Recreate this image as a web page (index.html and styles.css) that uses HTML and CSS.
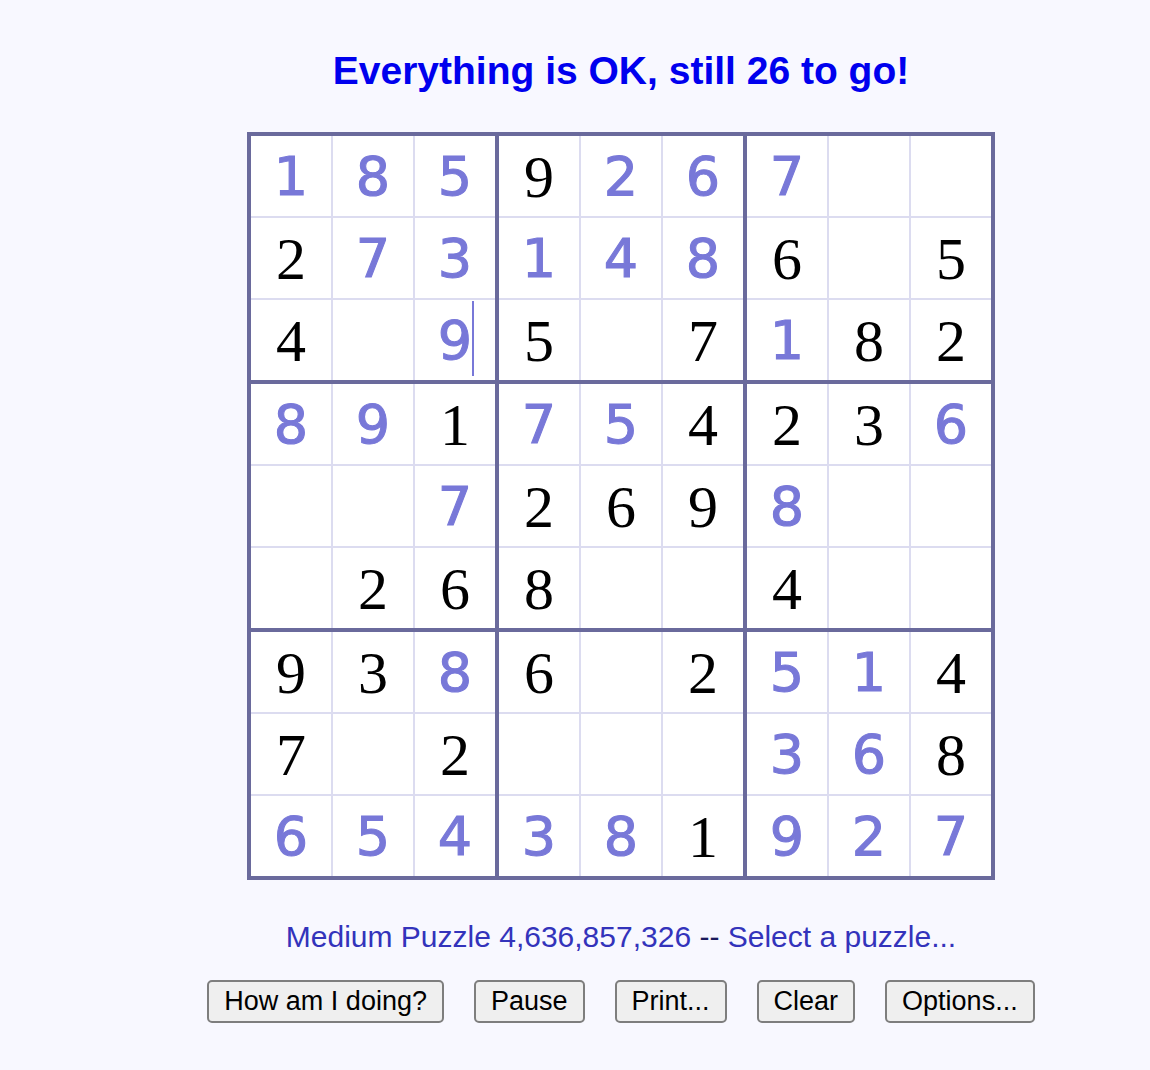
FILE: index.html
```html
<!DOCTYPE html>
<html lang="en">
<head>
<meta charset="utf-8">
<title>Sudoku</title>
<link rel="stylesheet" href="styles.css">
</head>
<body>
<main class="page">
  <h1 class="status">Everything is OK, still 26 to go!</h1>
  <div class="board">
    <div class="box">
      <div class="cell u">1</div><div class="cell u">8</div><div class="cell u">5</div>
      <div class="cell k">2</div><div class="cell u">7</div><div class="cell u">3</div>
      <div class="cell k">4</div><div class="cell"></div><div class="cell u"><span class="caret">9</span></div>
    </div>
    <div class="box">
      <div class="cell k">9</div><div class="cell u">2</div><div class="cell u">6</div>
      <div class="cell u">1</div><div class="cell u">4</div><div class="cell u">8</div>
      <div class="cell k">5</div><div class="cell"></div><div class="cell k">7</div>
    </div>
    <div class="box">
      <div class="cell u">7</div><div class="cell"></div><div class="cell"></div>
      <div class="cell k">6</div><div class="cell"></div><div class="cell k">5</div>
      <div class="cell u">1</div><div class="cell k">8</div><div class="cell k">2</div>
    </div>
    <div class="box">
      <div class="cell u">8</div><div class="cell u">9</div><div class="cell k">1</div>
      <div class="cell"></div><div class="cell"></div><div class="cell u">7</div>
      <div class="cell"></div><div class="cell k">2</div><div class="cell k">6</div>
    </div>
    <div class="box">
      <div class="cell u">7</div><div class="cell u">5</div><div class="cell k">4</div>
      <div class="cell k">2</div><div class="cell k">6</div><div class="cell k">9</div>
      <div class="cell k">8</div><div class="cell"></div><div class="cell"></div>
    </div>
    <div class="box">
      <div class="cell k">2</div><div class="cell k">3</div><div class="cell u">6</div>
      <div class="cell u">8</div><div class="cell"></div><div class="cell"></div>
      <div class="cell k">4</div><div class="cell"></div><div class="cell"></div>
    </div>
    <div class="box">
      <div class="cell k">9</div><div class="cell k">3</div><div class="cell u">8</div>
      <div class="cell k">7</div><div class="cell"></div><div class="cell k">2</div>
      <div class="cell u">6</div><div class="cell u">5</div><div class="cell u">4</div>
    </div>
    <div class="box">
      <div class="cell k">6</div><div class="cell"></div><div class="cell k">2</div>
      <div class="cell"></div><div class="cell"></div><div class="cell"></div>
      <div class="cell u">3</div><div class="cell u">8</div><div class="cell k">1</div>
    </div>
    <div class="box">
      <div class="cell u">5</div><div class="cell u">1</div><div class="cell k">4</div>
      <div class="cell u">3</div><div class="cell u">6</div><div class="cell k">8</div>
      <div class="cell u">9</div><div class="cell u">2</div><div class="cell u">7</div>
    </div>
  </div>
  <p class="puzzle-info"><a class="link" href="#">Medium Puzzle 4,636,857,326</a> -- <a class="link" href="#">Select a puzzle...</a></p>
  <div class="actions">
    <button class="btn" type="button">How am I doing?</button>
    <button class="btn" type="button">Pause</button>
    <button class="btn" type="button">Print...</button>
    <button class="btn" type="button">Clear</button>
    <button class="btn" type="button">Options...</button>
  </div>
</main>
</body>
</html>
```
FILE: styles.css
```css
html, body {
  margin: 0;
  padding: 0;
  background: #f8f8ff;
}

body {
  font-family: "Liberation Sans", Arial, sans-serif;
}

.page {
  display: flex;
  flex-direction: column;
  align-items: center;
  padding-left: 92px;
  padding-top: 48px;
}

.status {
  margin: 0;
  font-size: 39px;
  font-weight: bold;
  color: #0000ee;
  line-height: 45px;
}

.board {
  margin-top: 39px;
  display: grid;
  grid-template-columns: repeat(3, auto);
  gap: 4px;
  border: 4px solid #6a6a9c;
  background: #6a6a9c;
}

.box {
  display: grid;
  grid-template-columns: repeat(3, 80px);
  grid-auto-rows: 80px;
  gap: 2px;
  background: #dcdcf0;
}

.cell {
  background: #ffffff;
  display: flex;
  align-items: center;
  justify-content: center;
}

.cell.k {
  font-family: "Liberation Serif", "Times New Roman", serif;
  font-size: 60px;
  color: #000000;
  padding-top: 2px;
}

.cell.u {
  font-family: "DejaVu Sans", sans-serif;
  font-size: 54px;
  color: #7878d8;
  -webkit-text-stroke: 1.1px #7878d8;
}

.caret {
  position: relative;
}

.caret::after {
  content: "";
  position: absolute;
  left: 100%;
  top: -8px;
  width: 2px;
  height: 75px;
  background: #7878d8;
}

.puzzle-info {
  margin: 40px 0 0;
  font-size: 30px;
  line-height: 34px;
  color: #1a1a5c;
}

.link {
  color: #3333bb;
  text-decoration: none;
}

.actions {
  margin-top: 26px;
  display: flex;
  gap: 30px;
}

.btn {
  font-family: "Liberation Sans", Arial, sans-serif;
  font-size: 27px;
  height: 43px;
  padding: 0 15px;
  background: #efefef;
  border: 2px solid #7e7e7e;
  border-radius: 5px;
  color: #000;
}
```
